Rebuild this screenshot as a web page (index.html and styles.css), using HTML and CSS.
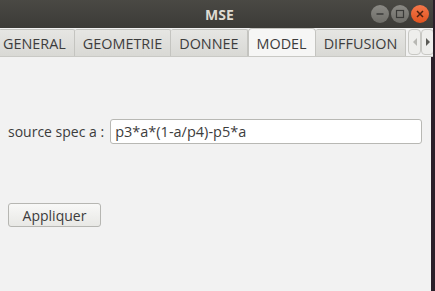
FILE: index.html
```html
<!DOCTYPE html>
<html lang="fr">
<head>
    <meta charset="UTF-8">
    <title>MSE</title>
    <link rel="stylesheet" href="styles.css">
</head>
<body>
    <div class="window">
        <div class="titlebar">
            <span class="title">MSE</span>
            <div class="controls">
                <span class="ctl">
                    <svg width="16" height="16" viewBox="0 0 16 16"><line x1="4.5" y1="8" x2="11.5" y2="8" stroke="#3a3a38" stroke-width="1.5"/></svg>
                </span>
                <span class="ctl">
                    <svg width="16" height="16" viewBox="0 0 16 16"><rect x="4.5" y="4.5" width="7" height="7" fill="none" stroke="#3a3a38" stroke-width="1.2"/></svg>
                </span>
                <span class="ctl close">
                    <svg width="16" height="16" viewBox="0 0 16 16"><path d="M5 5 L11 11 M11 5 L5 11" stroke="#4a2010" stroke-width="1.5"/></svg>
                </span>
            </div>
        </div>
        <div class="tabbar">
            <div class="tab first">GENERAL</div>
            <div class="tab">GEOMETRIE</div>
            <div class="tab">DONNEE</div>
            <div class="tab active">MODEL</div>
            <div class="tab">DIFFUSION</div>
            <div class="arrows">
                <span class="arrow dim">
                    <svg width="6" height="8" viewBox="0 0 6 8"><path d="M5 0 L1 4 L5 8 Z" fill="#b8b8b4"/></svg>
                </span>
                <span class="arrow">
                    <svg width="6" height="8" viewBox="0 0 6 8"><path d="M1 0 L5 4 L1 8 Z" fill="#5a5a56"/></svg>
                </span>
            </div>
        </div>
        <div class="content">
            <div class="row">
                <label for="src">source spec a :</label>
                <input id="src" type="text" value="p3*a*(1-a/p4)-p5*a">
            </div>
            <button class="apply">Appliquer</button>
        </div>
    </div>
</body>
</html>
```

FILE: styles.css
```css
body {
    margin: 0;
    font-family: "Open Sans", "Noto Sans", sans-serif;
    background: #2b1f2a;
}

.window {
    width: 433px;
    height: 291px;
    display: flex;
    flex-direction: column;
    background: #f2f2f2;
}

.titlebar {
    height: 28px;
    background: linear-gradient(#4a4944, #3c3b37);
    display: flex;
    align-items: center;
    justify-content: center;
    position: relative;
}

.title {
    color: #dfdbd2;
    font-weight: bold;
    font-size: 14px;
    margin-left: 6px;
}

.controls {
    position: absolute;
    right: 4px;
    top: 5px;
    display: flex;
    gap: 2px;
}

.ctl {
    width: 18px;
    height: 18px;
    border-radius: 50%;
    background: linear-gradient(#8a8984, #6e6d68);
    display: flex;
    align-items: center;
    justify-content: center;
}

.ctl.close {
    background: linear-gradient(#f4774a, #e0531f);
}

.tabbar {
    height: 29px;
    display: flex;
    align-items: flex-end;
    background: #f2f2f2;
    border-bottom: 1px solid #c9c9c5;
    box-sizing: border-box;
    overflow: hidden;
}

.tab {
    height: 27px;
    box-sizing: border-box;
    padding: 0 8px;
    display: flex;
    align-items: center;
    flex-shrink: 0;
    font-size: 14.4px;
    color: #3c3c3c;
    background: linear-gradient(#e6e6e3, #d9d9d5);
    border: 1px solid #c4c4c0;
    border-bottom: none;
    border-left: none;
    border-radius: 2px 2px 0 0;
}

.tab.first {
    padding-left: 4px;
    margin-left: -1px;
}

.tab.active {
    height: 29px;
    background: #f6f6f5;
    border-left: 1px solid #c4c4c0;
    color: #3c3c3c;
    border-radius: 4px 4px 0 0;
    margin-bottom: -1px;
    padding: 0 8px;
}

.arrows {
    display: flex;
    height: 27px;
    margin-left: 2px;
    flex-shrink: 0;
}

.arrow {
    width: 13px;
    height: 26px;
    box-sizing: border-box;
    border: 1px solid #c8c8c4;
    border-radius: 4px;
    background: #eeeeec;
    display: flex;
    align-items: center;
    justify-content: center;
}

.content {
    flex: 1;
    padding: 62px 0 0 8px;
    border-right: 2px solid #2b1f2a;
}

.row {
    display: flex;
    align-items: center;
    gap: 6px;
}

.row label {
    font-size: 14px;
    color: #3c3c3c;
}

.row input {
    width: 312px;
    height: 25px;
    box-sizing: border-box;
    border: 1px solid #b8b8b4;
    border-radius: 3px;
    font-family: inherit;
    font-size: 14.5px;
    color: #3c3c3c;
    padding: 0 4px;
    background: #fff;
}

.apply {
    margin-top: 59px;
    width: 93px;
    height: 24px;
    font-family: inherit;
    font-size: 14px;
    color: #3c3c3c;
    background: linear-gradient(#f8f8f7, #e8e8e5);
    border: 1px solid #b6b6b2;
    border-radius: 3px;
}
```
